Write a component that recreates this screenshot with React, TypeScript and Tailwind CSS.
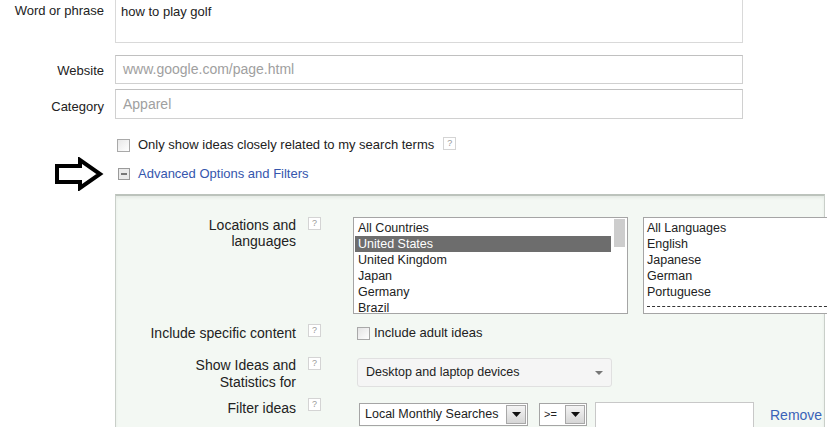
import React from 'react';

const font = { fontFamily: '"Liberation Sans", Arial, sans-serif' };

function Help() {
  return (
    <span className="flex h-[13px] w-[13px] items-center justify-center border border-[#d4d4d4] bg-white text-[9px] leading-none text-[#9a9a9a]">
      ?
    </span>
  );
}

function Arrow() {
  return (
    <svg width="50" height="34" viewBox="0 0 50 34">
      <polygon
        points="3,9 26,9 26,3 46,17 26,31 26,25 3,25"
        fill="white"
        stroke="black"
        strokeWidth="4"
        strokeLinejoin="miter"
      />
    </svg>
  );
}

function SelectArrow() {
  return (
    <span className="flex h-[19px] w-[20px] shrink-0 items-center justify-center border border-[#a8a8a8] bg-gradient-to-b from-[#f4f4f4] to-[#d6d6d6]">
      <svg width="9" height="5" viewBox="0 0 9 5">
        <polygon points="0,0 9,0 4.5,5" fill="#111" />
      </svg>
    </span>
  );
}

const countries = ['All Countries', 'United States', 'United Kingdom', 'Japan', 'Germany', 'Brazil'];
const languages = ['All Languages', 'English', 'Japanese', 'German', 'Portuguese'];

export default function App() {
  return (
    <div className="h-[427px] w-[827px] overflow-hidden bg-white text-[13px] text-[#222]" style={font}>
      {/* keyword form */}
      <div className="-mt-[6px] flex">
        <div className="w-[104px] pt-[7px] text-right">Word or phrase</div>
        <div className="ml-[11px] h-[49px] w-[628px] border border-[#d9d9d9] px-[5px] pt-[7px]">how to play golf</div>
      </div>
      <div className="mt-[12px] flex items-center">
        <div className="w-[104px] pt-[3px] text-right">Website</div>
        <div className="ml-[11px] flex h-[29px] w-[628px] items-center border border-[#d0d0d0] border-t-[#c0c0c0] px-[7px] text-[14px] text-[#a0a0a0]">
          www.google.com/page.html
        </div>
      </div>
      <div className="mt-[5px] flex items-center">
        <div className="w-[104px] pt-[5px] text-right">Category</div>
        <div className="ml-[11px] flex h-[30px] w-[628px] items-center border border-[#d0d0d0] border-t-[#c0c0c0] px-[7px] text-[14px] text-[#a0a0a0]">
          Apparel
        </div>
      </div>

      <div className="mt-[18px] flex h-[16px] items-center">
        <div className="w-[117px]" />
        <span className="h-[13px] w-[13px] border border-[#a9a9a9] bg-gradient-to-br from-[#e8e8e8] to-white" />
        <span className="ml-[8px]">Only show ideas closely related to my search terms</span>
        <span className="ml-[9px] -mt-[4px]">
          <Help />
        </span>
      </div>

      <div className="mt-[4px] flex h-[34px] items-center">
        <div className="flex w-[118px] justify-start pl-[54px]">
          <Arrow />
        </div>
        <span className="flex h-[12px] w-[12px] items-center justify-center border border-[#9a9a9a] bg-[#eaeaea]">
          <span className="h-[2px] w-[6px] bg-[#777]" />
        </span>
        <span className="ml-[8px] text-[#3556ad]">Advanced Options and Filters</span>
      </div>

      {/* advanced panel */}
      <div className="ml-[115px] mt-[3px] w-[710px] border-l border-r border-t-2 border-[#c9cfc9] border-t-[#bcc3bc] bg-[#f3f8f3] pt-[21px] text-[14px] shadow-[inset_0_2px_3px_rgba(0,0,0,0.06)]">
        <div className="flex">
          <div className="w-[180px] shrink-0 text-right leading-[16px]">
            Locations and
            <br />
            languages
          </div>
          <div className="ml-[12px] shrink-0">
            <Help />
          </div>
          <div className="ml-[32px] flex h-[97px] w-[275px] shrink-0 border border-[#a5a5a5] bg-white text-[12.5px] leading-[16px]">
            <div className="flex-1 pl-[1px] pt-[2px]">
              {countries.map((c, i) => (
                <div key={c} className={i === 1 ? 'bg-[#6d6d6d] pl-[3px] text-white' : 'pl-[3px]'}>
                  {c}
                </div>
              ))}
            </div>
            <div className="w-[16px] pt-[1px]">
              <div className="mx-auto h-[28px] w-[11px] bg-[#cdcdcd]" />
            </div>
          </div>
          <div className="ml-[15px] h-[97px] w-[190px] shrink-0 border border-[#a5a5a5] bg-white pl-[3px] pt-[2px] text-[12.5px] leading-[16px]">
            {languages.map((l) => (
              <div key={l}>{l}</div>
            ))}
            <div className="mt-[6px] border-t border-dashed border-[#333]" />
          </div>
        </div>

        <div className="mt-[11px] flex h-[16px] items-center">
          <div className="w-[180px] shrink-0 text-right">Include specific content</div>
          <div className="-mt-[5px] ml-[12px]">
            <Help />
          </div>
          <span className="ml-[36px] h-[13px] w-[13px] border border-[#a9a9a9] bg-gradient-to-br from-[#e4e4e4] to-white" />
          <span className="ml-[4px] text-[13px]">Include adult ideas</span>
        </div>

        <div className="mt-[16px] flex">
          <div className="w-[180px] shrink-0 text-right leading-[17px]">
            Show Ideas and
            <br />
            Statistics for
          </div>
          <div className="ml-[12px] shrink-0">
            <Help />
          </div>
          <div className="ml-[36px] mt-[1px] flex h-[29px] w-[255px] shrink-0 items-center justify-between rounded-[3px] border border-[#e0e0e0] bg-[#f5f5f5] pl-[8px] pr-[8px] text-[12.5px]">
            <span>Desktop and laptop devices</span>
            <svg width="8" height="4" viewBox="0 0 8 4">
              <polygon points="0,0 8,0 4,4" fill="#777" />
            </svg>
          </div>
        </div>

        <div className="mt-[7px] flex h-[40px]">
          <div className="w-[180px] shrink-0 text-right">Filter ideas</div>
          <div className="ml-[12px] shrink-0">
            <Help />
          </div>
          <div className="ml-[38px] mt-[5px] flex h-[23px] w-[169px] shrink-0 items-center justify-between border border-[#a5a5a5] bg-white pl-[5px] pr-[1px] text-[12.5px]">
            <span>Local Monthly Searches</span>
            <SelectArrow />
          </div>
          <div className="ml-[11px] mt-[5px] flex h-[23px] w-[48px] shrink-0 items-center justify-between border border-[#a5a5a5] bg-white pl-[4px] pr-[1px] text-[11px]">
            <span>&gt;=</span>
            <SelectArrow />
          </div>
          <div className="ml-[8px] mt-[4px] h-[30px] w-[159px] shrink-0 border border-[#c8c8c8] bg-white" />
          <span className="ml-[16px] mt-[7px] shrink-0 text-[14px] text-[#3a63b8]">Remove</span>
        </div>
      </div>
    </div>
  );
}
